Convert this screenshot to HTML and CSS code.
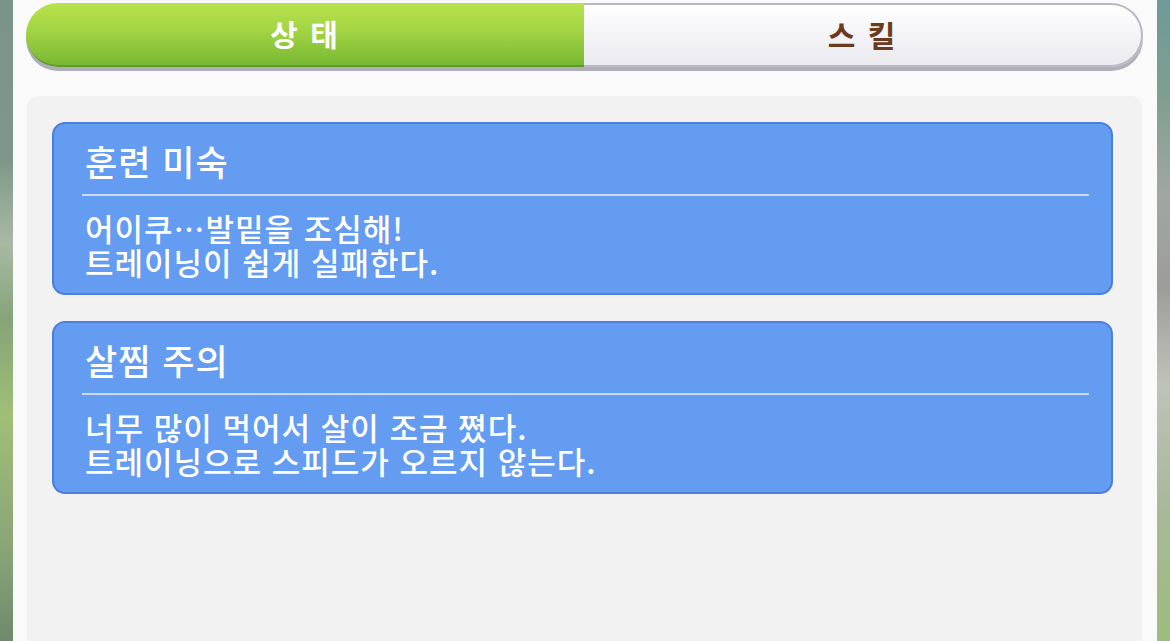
FILE: index.html
```html
<!DOCTYPE html>
<html lang="ko">

<head>
  <meta charset="UTF-8" />
  <meta name="viewport" content="width=device-width, initial-scale=1" />
  <title>상태</title>
  <link rel="stylesheet" href="styles.css">
</head>

<body>
  <div class="edge edge-left"></div>

  <div class="panel">
    <!-- Tab switcher -->
    <div class="tabs">
      <div class="tab active">상 태</div>
      <div class="tab">스 킬</div>
    </div>

    <!-- Status list -->
    <div class="content">
      <div class="card">
        <div class="card-title">훈련 미숙</div>
        <div class="card-body">
          <div class="line">어이쿠…발밑을 조심해!</div>
          <div class="line">트레이닝이 쉽게 실패한다.</div>
        </div>
      </div>
      <div class="card">
        <div class="card-title">살찜 주의</div>
        <div class="card-body">
          <div class="line">너무 많이 먹어서 살이 조금 쪘다.</div>
          <div class="line">트레이닝으로 스피드가 오르지 않는다.</div>
        </div>
      </div>
    </div>
  </div>

  <div class="edge edge-right"></div>
</body>

</html>
```

FILE: styles.css
```css
/* Basic reset */
body {
  margin: 0;
  height: 641px;
  overflow: hidden;
  display: flex;
  font-family: "Noto Sans CJK KR", "Noto Sans", sans-serif;
}

/* Blurred background at the sides */
.edge {
  width: 13px;
  flex: none;
}

.edge-left {
  background: linear-gradient(180deg, #7b9488 0%, #7f978a 25%, #a9b9a4 38%, #86a477 50%, #9fbf77 65%, #8aa677 85%, #6f8a6c 100%);
}

.edge-right {
  background: linear-gradient(180deg, #6e9a9a 0%, #7f9e90 15%, #a0a6a2 30%, #9d9d9b 45%, #bfc2b8 60%, #a7b898 80%, #9cbd7c 100%);
}

.panel {
  flex: 1;
  background: #fafafb;
  padding: 3px 14px 0 13px;
  display: flex;
  flex-direction: column;
}

/* Tabs */
.tabs {
  display: flex;
  height: 64px;
  border-radius: 32px;
  box-shadow: 0 4px 0 #aeadb8;
}

.tab {
  flex: 1;
  display: flex;
  align-items: center;
  justify-content: center;
  font-size: 30px;
  font-weight: bold;
  letter-spacing: 2px;
  color: #6c3b1d;
  background: linear-gradient(180deg, #ffffff 0%, #f4f4f8 50%, #e9e9ef 100%);
  border: 2px solid #b9b8c4;
  border-left: none;
  border-radius: 0 32px 32px 0;
  padding-bottom: 2px;
}

.tab.active {
  color: #fff;
  background: linear-gradient(180deg, #b8e24c 0%, #a2d443 45%, #79b833 100%);
  border: none;
  border-bottom: 2px solid #5f9a2c;
  border-radius: 32px 0 0 32px;
  flex: 0 0 558px;
}

/* Status list */
.content {
  flex: 1;
  margin: 29px 1px 0 1px;
  background: #f2f2f2;
  border-radius: 10px 10px 0 0;
  padding: 26px 29px 0 25px;
  display: flex;
  flex-direction: column;
  gap: 26px;
}

.card {
  background: #639cf0;
  border: 2px solid #4a7edf;
  border-radius: 13px;
  padding: 17px 22px 14px 28px;
  color: #fff;
}

.card-title {
  font-size: 35px;
  font-weight: 500;
  letter-spacing: 1px;
  line-height: 40px;
  padding: 0 0 13px 3px;
  border-bottom: 2px solid #c8daf6;
}

.card-body {
  padding: 15px 0 0 3px;
}

.line {
  font-size: 31px;
  font-weight: 500;
  letter-spacing: 1px;
  line-height: 34px;
  white-space: nowrap;
}
```
